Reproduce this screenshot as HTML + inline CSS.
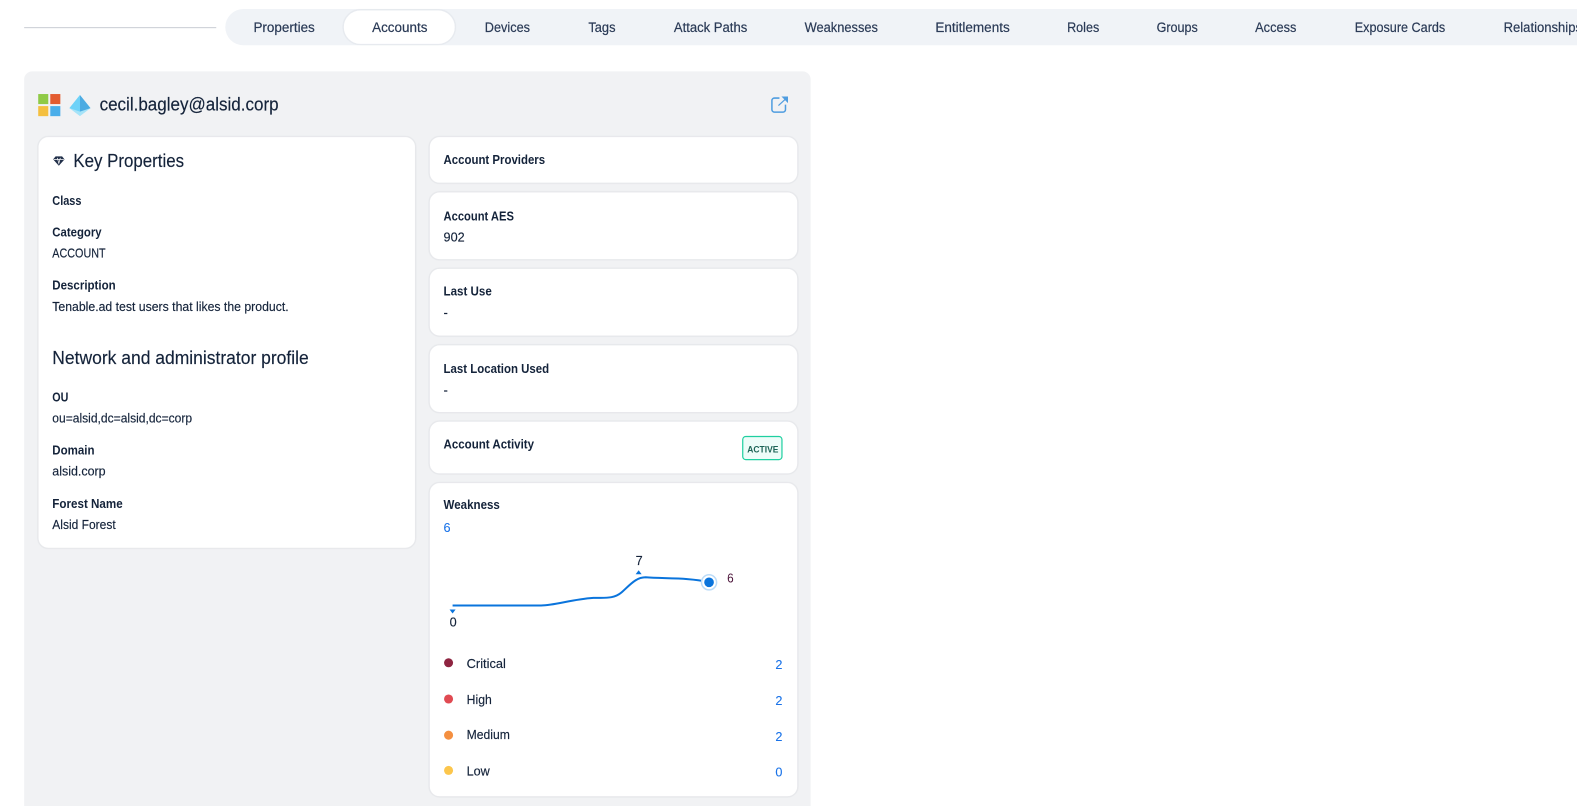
<!DOCTYPE html>
<html lang="en"><head><meta charset="utf-8"><title>cecil.bagley@alsid.corp</title>
<style>
html,body{margin:0;padding:0;width:1577px;height:806px;overflow:hidden;background:#fff}
svg{display:block;position:absolute;left:0;top:0}
text{font-family:"Liberation Sans",sans-serif;fill:#14233a;white-space:pre}
.t{font-size:14px;fill:#2a3a56;stroke:#2a3a56;stroke-width:.2px}
.b{font-size:13px;font-weight:bold}
.r{font-size:13px;stroke:#14233a;stroke-width:.15px}
.h{font-size:18px;stroke:#14233a;stroke-width:.15px}
.n{font-size:13px;fill:#1a73e8;stroke:#1a73e8;stroke-width:.1px}
.c{fill:#fff;stroke:#e9eaed;stroke-width:.8;filter:drop-shadow(0 .5px .6px rgba(30,40,60,.14))}
</style></head><body>
<svg width="1577" height="806" viewBox="0 0 1568 801.4" xmlns="http://www.w3.org/2000/svg">
<rect x="24" y="27" width="191" height="1" fill="#c9ccd3"/>
<path d="M1568 9H242a18 18 0 0 0 0 36H1568z" fill="#f0f3f7"/>
<rect x="341.500" y="10" width="111" height="34" rx="17" fill="#fff" stroke="#e9ecf1" stroke-width=".8" style="filter:drop-shadow(0 .5px .6px rgba(30,40,60,.14))"/>
<text class="t" x="252" y="32" textLength="61" lengthAdjust="spacingAndGlyphs">Properties</text>
<text class="t" x="370" y="32" textLength="55" lengthAdjust="spacingAndGlyphs">Accounts</text>
<text class="t" x="482" y="32" textLength="45" lengthAdjust="spacingAndGlyphs">Devices</text>
<text class="t" x="585" y="32" textLength="27" lengthAdjust="spacingAndGlyphs">Tags</text>
<text class="t" x="670" y="32" textLength="73" lengthAdjust="spacingAndGlyphs">Attack Paths</text>
<text class="t" x="800" y="32" textLength="73" lengthAdjust="spacingAndGlyphs">Weaknesses</text>
<text class="t" x="930" y="32" textLength="74" lengthAdjust="spacingAndGlyphs">Entitlements</text>
<text class="t" x="1061" y="32" textLength="32" lengthAdjust="spacingAndGlyphs">Roles</text>
<text class="t" x="1150" y="32" textLength="41" lengthAdjust="spacingAndGlyphs">Groups</text>
<text class="t" x="1248" y="32" textLength="41" lengthAdjust="spacingAndGlyphs">Access</text>
<text class="t" x="1347" y="32" textLength="90" lengthAdjust="spacingAndGlyphs">Exposure Cards</text>
<text class="t" x="1495" y="32" textLength="78" lengthAdjust="spacingAndGlyphs">Relationships</text>

<path d="M32 71H798a8 8 0 0 1 8 8V802H24V79a8 8 0 0 1 8-8z" fill="#f1f2f4"/>

<!-- header icons -->
<rect x="38" y="93.500" width="10" height="10" fill="#8fca46"/>
<rect x="50" y="93.500" width="10" height="10" fill="#e35c30"/>
<rect x="38" y="105.500" width="10" height="10" fill="#f4bf3f"/>
<rect x="50" y="105.500" width="10" height="10" fill="#4aaeea"/>
<path d="M79.500 94.500L90 107.500 79.500 115.500 69 107.500z" fill="#a5e3f8"/>
<path d="M79.500 94.500L69 107.500 79.500 111z" fill="#6ed2f8"/>
<path d="M79.500 94.500L90 107.500 79.500 111z" fill="#4cabe2"/>
<text class="h" x="99" y="110" textLength="178" lengthAdjust="spacingAndGlyphs">cecil.bagley@alsid.corp</text>
<g fill="none" stroke="#4f9de0" stroke-width="1.500">
<path d="M775 97.500H770a2.500 2.500 0 0 0-2.500 2.500v9a2.500 2.500 0 0 0 2.500 2.500h8.500a2.500 2.500 0 0 0 2.500-2.500v-5"/>
<path d="M774 105L781 98.500" stroke-width="1.200"/>
</g>
<path d="M777 96H783.500V102.500z" fill="#4f9de0"/>

<!-- key properties -->
<rect class="c" x="38" y="136" width="375" height="409" rx="10"/>
<path d="M55.500 156h6l2 2.500-5 5.500-5-5.500z" fill="#22304a" stroke="#22304a" stroke-width="1"/>
<path d="M53.500 158.500h10M57 157l1.500 5.500 1.500-5.500" fill="none" stroke="#fff" stroke-width=".7"/>
<text class="h" x="73" y="166" textLength="110" lengthAdjust="spacingAndGlyphs">Key Properties</text>
<text class="b" x="52" y="204" textLength="29" lengthAdjust="spacingAndGlyphs">Class</text>
<text class="b" x="52" y="235" textLength="49" lengthAdjust="spacingAndGlyphs">Category</text>
<text class="r" x="52" y="256" textLength="53" lengthAdjust="spacingAndGlyphs">ACCOUNT</text>
<text class="b" x="52" y="288" textLength="63" lengthAdjust="spacingAndGlyphs">Description</text>
<text class="r" x="52" y="309" textLength="235" lengthAdjust="spacingAndGlyphs">Tenable.ad test users that likes the product.</text>
<text class="h" x="52" y="362" textLength="255" lengthAdjust="spacingAndGlyphs">Network and administrator profile</text>
<text class="b" x="52" y="399" textLength="16" lengthAdjust="spacingAndGlyphs">OU</text>
<text class="r" x="52" y="420" textLength="139" lengthAdjust="spacingAndGlyphs">ou=alsid,dc=alsid,dc=corp</text>
<text class="b" x="52" y="452" textLength="42" lengthAdjust="spacingAndGlyphs">Domain</text>
<text class="r" x="52" y="473" textLength="53" lengthAdjust="spacingAndGlyphs">alsid.corp</text>
<text class="b" x="52" y="505" textLength="70" lengthAdjust="spacingAndGlyphs">Forest Name</text>
<text class="r" x="52" y="526" textLength="63" lengthAdjust="spacingAndGlyphs">Alsid Forest</text>

<!-- right cards -->
<rect class="c" x="427" y="136" width="366" height="46" rx="10"/>
<rect class="c" x="427" y="191" width="366" height="67" rx="10"/>
<rect class="c" x="427" y="267" width="366" height="67" rx="10"/>
<rect class="c" x="427" y="343" width="366" height="67" rx="10"/>
<rect class="c" x="427" y="419" width="366" height="52" rx="10"/>
<rect class="c" x="427" y="480" width="366" height="312" rx="10"/>
<text class="b" x="441" y="163" textLength="101" lengthAdjust="spacingAndGlyphs">Account Providers</text>
<text class="b" x="441" y="219" textLength="70" lengthAdjust="spacingAndGlyphs">Account AES</text>
<text class="r" x="441" y="240" textLength="21" lengthAdjust="spacingAndGlyphs">902</text>
<text class="b" x="441" y="294" textLength="48" lengthAdjust="spacingAndGlyphs">Last Use</text>
<text class="r" x="441" y="315">-</text>
<text class="b" x="441" y="371" textLength="105" lengthAdjust="spacingAndGlyphs">Last Location Used</text>
<text class="r" x="441" y="392">-</text>
<text class="b" x="441" y="446" textLength="90" lengthAdjust="spacingAndGlyphs">Account Activity</text>
<rect x="738.500" y="434" width="39" height="23" rx="3" fill="#edfcf8" stroke="#1fcfa0" stroke-width="1.200"/>
<text x="743" y="450" style="font-size:9.500px;font-weight:bold;fill:#1d6456" textLength="31" lengthAdjust="spacingAndGlyphs">ACTIVE</text>

<text class="b" x="441" y="506" textLength="56" lengthAdjust="spacingAndGlyphs">Weakness</text>
<text class="n" x="441" y="529" textLength="7" lengthAdjust="spacingAndGlyphs">6</text>
<path d="M450 602H538C552 602 568 596 590 594.500C600 594 610 596 618 589C626 582 632 574 642 574C660 575.500 685 574 705 579" fill="none" stroke="#0a74dc" stroke-width="2"/>
<circle cx="705" cy="579" r="7.500" fill="#fff" stroke="#bcdcf8" stroke-width="1.500"/>
<circle cx="705" cy="579" r="4.800" fill="#0a74dc"/>
<path d="M447 606h6l-3 4z" fill="#0a74dc"/>
<path d="M632 571h6l-3-4z" fill="#0a74dc"/>
<text class="r" x="632" y="562" textLength="7" lengthAdjust="spacingAndGlyphs">7</text>
<text x="723" y="579" textLength="6.500" lengthAdjust="spacingAndGlyphs" style="font-size:13px;fill:#4a1238">6</text>
<text class="r" x="447" y="623" textLength="7" lengthAdjust="spacingAndGlyphs">0</text>

<circle cx="446" cy="659" r="4.500" fill="#8e2440"/>
<circle cx="446" cy="695" r="4.500" fill="#e04a52"/>
<circle cx="446" cy="731" r="4.500" fill="#f48f40"/>
<circle cx="446" cy="766" r="4.500" fill="#fcc64c"/>
<text class="r" x="464" y="664" textLength="39" lengthAdjust="spacingAndGlyphs">Critical</text>
<text class="r" x="464" y="700" textLength="25" lengthAdjust="spacingAndGlyphs">High</text>
<text class="r" x="464" y="735" textLength="43" lengthAdjust="spacingAndGlyphs">Medium</text>
<text class="r" x="464" y="771" textLength="23" lengthAdjust="spacingAndGlyphs">Low</text>
<text class="n" x="771" y="665" textLength="7" lengthAdjust="spacingAndGlyphs">2</text>
<text class="n" x="771" y="701" textLength="7" lengthAdjust="spacingAndGlyphs">2</text>
<text class="n" x="771" y="737" textLength="7" lengthAdjust="spacingAndGlyphs">2</text>
<text class="n" x="771" y="772" textLength="7" lengthAdjust="spacingAndGlyphs">0</text>
</svg>
</body></html>
